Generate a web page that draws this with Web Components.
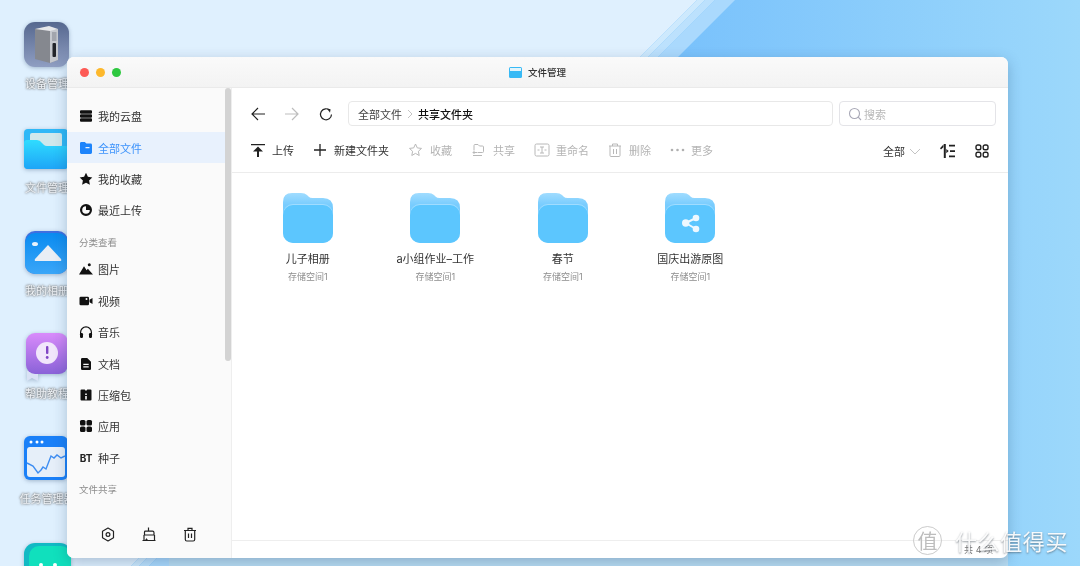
<!DOCTYPE html>
<html lang="zh">
<head>
<meta charset="utf-8">
<title>文件管理</title>
<style>
html, body { margin: 0; padding: 0; }
body { font-family: Inter, "Noto Sans CJK SC", sans-serif; width: 1080px; height: 566px; overflow: hidden; }
</style>
</head>
<body>

<nas-desktop>
  <desktop-icon slot="icons" top="22" label-top="54" label="设备管理">
    <svg width="46" height="46" viewBox="0 0 46 46"><defs><linearGradient id="dv" x1="0" y1="0" x2="0" y2="1"><stop offset="0" stop-color="#56688f"/><stop offset="1" stop-color="#8f9ec2"/></linearGradient></defs><rect width="45" height="45" rx="11" fill="url(#dv)"/><path d="M11 7l15-2 8 3v30l-8 3-15-4z" fill="#85888f"/><path d="M26 8l8-1v31l-8 3z" fill="#c5c8ce"/><path d="M11 7l14-3 9 3-8 2z" fill="#e6e7ea"/><rect x="28.5" y="21" width="3.5" height="14" rx="1" fill="#22242a"/><rect x="28" y="10" width="4.5" height="9" fill="#a2a5ad"/></svg>
  </desktop-icon>
  <desktop-icon slot="icons" top="129" label-top="51" label="文件管理">
    <svg width="46" height="46" viewBox="0 0 46 46"><defs><linearGradient id="fm" x1="0" y1="0" x2="0" y2="1"><stop offset="0" stop-color="#2fdcff"/><stop offset="1" stop-color="#1ea5f7"/></linearGradient></defs><path d="M0 4q0-4 4-4h36q4 0 4 4v32q0 4-4 4H4q-4 0-4-4z" fill="#2fb8f7"/><rect x="6" y="4" width="32" height="14" rx="2" fill="#cfe8ec"/><path d="M0 14q0-3 3-3h10q3 0 5 3l2 2q1 1 3 1h19q2 0 2 3v16q0 4-4 4H4q-4 0-4-4z" fill="url(#fm)"/></svg>
  </desktop-icon>
  <desktop-icon slot="icons" top="231" label-top="52" label="我的相册">
    <svg width="46" height="46" viewBox="0 0 46 46"><defs><linearGradient id="ph" x1="0" y1="0" x2="0" y2="1"><stop offset="0" stop-color="#0a8bf0"/><stop offset="1" stop-color="#3aa6f8"/></linearGradient></defs><rect x="1" y="0" width="43" height="43" rx="10" fill="#3f6fe0"/><rect x="1" y="2" width="43" height="41" rx="10" fill="url(#ph)"/><ellipse cx="11" cy="13" rx="3" ry="2" fill="#e8f3fc"/><path d="M24 14l13 14q1 2-1 2H12q-2 0-1-2z" fill="#e9eef5"/></svg>
  </desktop-icon>
  <desktop-icon slot="icons" top="333" label-top="53" label="帮助教程">
    <svg width="46" height="50" viewBox="0 0 46 50"><defs><linearGradient id="hp" x1="0" y1="0" x2="0" y2="1"><stop offset="0" stop-color="#d98bfb"/><stop offset="1" stop-color="#8a62d8"/></linearGradient></defs><path d="M3 38v10l5-3 6 3V38z" fill="#d9e2f5"/><rect x="2" y="0" width="42" height="41" rx="9" fill="url(#hp)"/><circle cx="23" cy="20" r="11" fill="#f1e6fb"/><rect x="22" y="13" width="2.4" height="8" rx="1" fill="#8146c4"/><circle cx="23.2" cy="24.5" r="1.4" fill="#8146c4"/></svg>
  </desktop-icon>
  <desktop-icon slot="icons" top="436" label-top="55" label="任务管理器">
    <svg width="46" height="46" viewBox="0 0 46 46"><rect width="44" height="44" rx="6" fill="#1a80f8"/><circle cx="7" cy="6" r="1.5" fill="#fff"/><circle cx="13" cy="6" r="1.5" fill="#fff"/><circle cx="18" cy="6" r="1.5" fill="#fff"/><rect x="3" y="11" width="38" height="30" rx="3" fill="#e6eff9"/><path d="M3 27l6 3 5 7 3-3 2-3 3 2 5-13 3 2 3-3 4 3 4-2" fill="none" stroke="#3d8df2" stroke-width="1.4"/></svg>
  </desktop-icon>
  <desktop-icon slot="icons" top="543" label-top="54" label="">
    <svg width="47" height="47" viewBox="0 0 47 47"><rect width="47" height="47" rx="11" fill="#12b9c4"/><rect x="5" y="3" width="42" height="44" rx="10" fill="#10e0bd"/><circle cx="17" cy="22" r="2" fill="#fff"/><circle cx="31" cy="22" r="2" fill="#fff"/></svg>
  </desktop-icon>

  <file-window slot="window"></file-window>
  <site-mark slot="mark"></site-mark>
</nas-desktop>

<script>
// shared fill-style icons for the sidebar, 14px box
const SIDE_ICONS = {
  disk: '<path d="M1 2.2q0-1 1-1h10q1 0 1 1v1.600q0 1-1 1H2q-1 0-1-1zM1 6.200q0-.9 1-.9h10q1 0 1 .9v1.600q0 .9-1 .9H2q-1 0-1-.9zM1 10.200q0-1 1-1h10q1 0 1 1v1.600q0 1-1 1H2q-1 0-1-1z"/>',
  file: '<path fill-rule="evenodd" d="M1 2.4q0-1.400 1.400-1.400h3.400l1.600 1.600h4.200q1.400 0 1.400 1.400v7.600q0 1.400-1.400 1.400H2.400Q1 13 1 11.600zM6.500 5.900v1.300h4V5.900z"/>',
  star: '<path d="M7 .8l1.900 4 4.400.6-3.200 3 .8 4.400L7 10.700l-3.900 2.100.8-4.400-3.200-3 4.400-.6z"/>',
  clock: '<path fill-rule="evenodd" d="M7 1a6 6 0 1 0 0 12A6 6 0 0 0 7 1zM7 3.200v3.800h3.800A3.800 3.800 0 1 1 7 3.200z"/>',
  image: '<path d="M0 12.500L5 4.300l2.600 3.900 1.300-1.500 5.100 5.800z"/><circle cx="10.300" cy="2.700" r="1.500"/>',
  video: '<path d="M.5 4q0-1.300 1.300-1.300h7Q10 2.700 10 4v6q0 1.300-1.200 1.300h-7Q.5 11.300.5 10zM10.500 5.700L13.500 4v6l-3-1.700z"/><circle cx="7.500" cy="5" r="1" fill="#fafafa"/>',
  music: '<path d="M7 1.300A6 6 0 0 0 1 7.300V12h1.200V7.300a4.800 4.800 0 0 1 9.600 0V12H13V7.300a6 6 0 0 0-6-6z"/><rect x="1" y="8" width="3" height="5" rx="1.200"/><rect x="10" y="8" width="3" height="5" rx="1.200"/>',
  doc: '<path fill-rule="evenodd" d="M2 2.200Q2 1 3.200 1h5L12 4.800v7Q12 13 10.800 13H3.200Q2 13 2 11.800zM4.300 6.800v1.100h5.400V6.800zM4.300 9.300v1.100h5.400V9.300z"/>',
  zip: '<path fill-rule="evenodd" d="M1.500 2.500Q1.500 1.500 2.500 1.500H5.700L7 3l1.300-1.500H11.500q1 0 1 1v9q0 1-1 1H2.500q-1 0-1-1zM6.200 5.500V7H7.800V5.500zM6.200 8V11.500H7.800V8z"/>',
  apps: '<rect x="1" y="1" width="5.500" height="5.500" rx="1.600"/><rect x="7.500" y="1" width="5.500" height="5.500" rx="1.600"/><rect x="1" y="7.500" width="5.500" height="5.500" rx="1.600"/><rect x="7.500" y="7.500" width="5.500" height="5.500" rx="1.600"/>'
};

class NasDesktop extends HTMLElement {
  constructor() {
    super();
    this.attachShadow({ mode: "open" }).innerHTML = `
    <style>
      :host { display: block; position: relative; width: 1080px; height: 566px; overflow: hidden;
        background: linear-gradient(90deg, #72bdfc 55%, #9cd8fb 100%); filter: blur(.3px); }
      .wall { position: absolute; inset: 0; }
    </style>
    <svg class="wall" width="1080" height="566" viewBox="0 0 1080 566">
      <polygon points="0,0 697,0 131,566 0,566" fill="#dff0fe"/>
      <polygon points="697,0 705,0 139,566 131,566" fill="#cde9fd"/>
      <polygon points="705,0 715,0 149,566 139,566" fill="#bce1fd"/>
      <polygon points="715,0 735,0 169,566 149,566" fill="#aad9fd"/>
      <rect x="169" y="552" width="839" height="14" fill="#b8dcf2"/>
    </svg>
    <slot name="icons"></slot>
    <slot name="window"></slot>
    <slot name="mark"></slot>`;
  }
}
customElements.define("nas-desktop", NasDesktop);

// desktop shortcuts sit on a free canvas
class DesktopIcon extends HTMLElement {
  constructor() {
    super();
    this.attachShadow({ mode: "open" }).innerHTML = `
    <style>
      :host { position: absolute; left: 24px; top: ${this.getAttribute("top")}px; display: block; width: 46px; }
      ::slotted(svg) { display: block; filter: drop-shadow(0 1px 2px rgba(40,70,110,.35)); }
      .label { position: absolute; left: -24px; top: ${this.getAttribute("label-top")}px; width: 94px; text-align: center; font-size: 11px; line-height: 16px;
        white-space: nowrap; color: #eef2f6; text-shadow: 0 0 2px #666, 0 0 3px #888; }
    </style>
    <slot></slot>
    <div class="label">${this.getAttribute("label")}</div>`;
  }
}
customElements.define("desktop-icon", DesktopIcon);

class SideItem extends HTMLElement {
  constructor() {
    super();
    const name = this.getAttribute("icon");
    const glyph = name === "bt"
      ? '<span class="bt">BT</span>'
      : `<svg width="14" height="14" viewBox="0 0 14 14" fill="currentColor">${SIDE_ICONS[name]}</svg>`;
    this.attachShadow({ mode: "open" }).innerHTML = `
    <style>
      :host { display: flex; align-items: center; gap: 5px; height: 31.4px; padding-left: 12px; font-size: 11px; color: #333; }
      :host([active]) { background: #e8f1fd; color: #3d93fb; }
      .ico { width: 14px; height: 14px; display: flex; align-items: center; justify-content: center; color: #111; }
      :host([active]) .ico { color: #1d84fb; }
      .bt { font-size: 10px; font-weight: 700; color: #222; }
      svg { display: block; }
    </style>
    <span class="ico">${glyph}</span><span><slot></slot></span>`;
  }
}
customElements.define("side-item", SideItem);

class SideBar extends HTMLElement {
  constructor() {
    super();
    this.attachShadow({ mode: "open" }).innerHTML = `
    <style>
      :host { position: relative; display: flex; flex-direction: column; width: 164px; flex: none; background: #fafafa; box-sizing: border-box;
        padding-top: 12.6px; overflow: hidden; }
      h5 { margin: 0; font-weight: 400; font-size: 9.5px; line-height: 13px; color: #8d8d8d; padding: 10px 0 4.6px 12px; }
      .list { flex: 1; }
      .thumb { position: absolute; right: 0; top: 0; width: 6px; height: 273px; border-radius: 3px; background: #d3d3d3; }
      .foot { display: flex; gap: 27px; padding: 0 0 16px 34px; color: #222; }
      .foot svg { display: block; }
    </style>
    <div class="list">
      <side-item icon="disk">我的云盘</side-item>
      <side-item icon="file" active>全部文件</side-item>
      <side-item icon="star">我的收藏</side-item>
      <side-item icon="clock">最近上传</side-item>
      <h5>分类查看</h5>
      <side-item icon="image">图片</side-item>
      <side-item icon="video">视频</side-item>
      <side-item icon="music">音乐</side-item>
      <side-item icon="doc">文档</side-item>
      <side-item icon="zip">压缩包</side-item>
      <side-item icon="apps">应用</side-item>
      <side-item icon="bt">种子</side-item>
      <h5>文件共享</h5>
    </div>
    <div class="foot">
      <svg width="14" height="15" viewBox="0 0 14 15" fill="none" stroke="currentColor" stroke-width="1.2"><path d="M7 1l5.500 3.200v6.600L7 14l-5.500-3.200V4.200z" stroke-linejoin="round"/><circle cx="7" cy="7.5" r="1.9"/></svg>
      <svg width="14" height="15" viewBox="0 0 14 15" fill="none" stroke="currentColor" stroke-width="1.2"><path d="M6.500 .5v4M2.500 5q0-.8 1-.8h7q1.500 0 1.500 1.500V8H2.500zM2 8v5.500h1.500l1-1.500 1 1.500h7V8M.5 13.500h13" stroke-linejoin="round"/></svg>
      <svg width="14" height="15" viewBox="0 0 14 15" fill="none" stroke="currentColor" stroke-width="1.2"><path d="M1 3.500h12M5 3.500V1.300h4v2.200M2.300 3.500v9q0 1.500 1.500 1.500h6.400q1.500 0 1.500-1.500v-9M5.500 6.500V11M8.500 6.500V11"/></svg>
    </div>
    <div class="thumb"></div>`;
  }
}
customElements.define("side-bar", SideBar);

class ToolBtn extends HTMLElement {
  constructor() {
    super();
    this.attachShadow({ mode: "open" }).innerHTML = `
    <style>
      :host { display: inline-flex; align-items: center; gap: 7px; font-size: 11px; color: #333; }
      :host([off]) { color: #b4b4b4; }
      ::slotted(svg) { display: block; }
    </style>
    <slot name="icon"></slot><span><slot></slot></span>`;
  }
}
customElements.define("tool-btn", ToolBtn);

class FileTile extends HTMLElement {
  constructor() {
    super();
    const share = this.hasAttribute("shared") ? `
      <g fill="#eef8ff">
        <path d="M20.700 30L31 25M20.700 30L31 36" fill="none" stroke="#eef8ff" stroke-width="2"/>
        <circle cx="20.700" cy="30" r="3.700"/><circle cx="31" cy="25" r="3.300"/><circle cx="31" cy="36" r="3.300"/>
      </g>` : "";
    const gid = "fb" + Math.random().toString(36).slice(2, 7);
    this.attachShadow({ mode: "open" }).innerHTML = `
    <style>
      :host { display: flex; flex-direction: column; align-items: center; width: 127.5px; }
      svg { display: block; }
      .name { margin-top: 9px; font-size: 11px; line-height: 15px; color: #333; white-space: nowrap; }
      .sub { margin-top: 3px; font-size: 9px; line-height: 13px; color: #8e8e8e; white-space: nowrap; }
    </style>
    <svg width="50" height="50" viewBox="0 0 50 50">
      <defs><linearGradient id="${gid}" x1="0" y1="0" x2="0" y2="1"><stop offset="0" stop-color="#a0dcff"/><stop offset=".3" stop-color="#78ccfe"/></linearGradient></defs>
      <path d="M0 9q0-9 9-9h9q4 0 6 2l1.500 1.500q1.500 1.500 4 1.500H40q10 0 10 10v25H0z" fill="url(#${gid})"/>
      <rect y="11" width="50" height="39" rx="10" fill="#a0dcff"/>
      <rect y="12" width="50" height="38" rx="10" fill="#5cc6fe"/>
      ${share}
    </svg>
    <div class="name"><slot></slot></div>
    <div class="sub">存储空间1</div>`;
  }
}
customElements.define("file-tile", FileTile);

class FileWindow extends HTMLElement {
  constructor() {
    super();
    this.attachShadow({ mode: "open" }).innerHTML = `
    <style>
      /* the window floats on the desktop */
      :host { position: absolute; left: 67px; top: 57px; width: 941px; height: 501px; display: flex; flex-direction: column;
        background: #fff; border-radius: 7px; box-shadow: 0 4px 14px rgba(30,60,100,.28); overflow: hidden; }
      .title { position: relative; flex: none; height: 30px; display: flex; align-items: center; justify-content: center; gap: 6px;
        background: linear-gradient(#fafafa, #f3f3f3); border-bottom: 1px solid #eaeaea; font-size: 9.5px; font-weight: 500; color: #333; }
      .lights { position: absolute; left: 13px; top: 11px; display: flex; gap: 7.1px; }
      .lights i { width: 9px; height: 9px; border-radius: 50%; }
      .body { flex: 1; min-height: 0; display: flex; }
      main { flex: 1; min-width: 0; display: flex; flex-direction: column; border-left: 1px solid #eee; }
      .nav { display: flex; align-items: center; height: 25px; margin: 13px 12px 0 19px; }
      .nav svg { display: block; flex: none; }
      .back { margin-right: 20px; }
      .crumbs { flex: 1; height: 25px; margin-left: 15px; box-sizing: border-box; border: 1px solid #e8e8e8; border-radius: 4px;
        display: flex; align-items: center; gap: 5px; padding-left: 9px; font-size: 11px; color: #444; }
      .crumbs b { color: #111; font-weight: 500; }
      .search { width: 157px; height: 25px; margin-left: 6px; box-sizing: border-box; border: 1px solid #e4e4e8; border-radius: 4px;
        display: flex; align-items: center; gap: 2px; padding-left: 8px; font-size: 11px; color: #b8b8b8; }
      .bar { flex: none; display: flex; align-items: center; height: 34px; margin-top: 7px; padding: 0 19px 5px 19px; border-bottom: 1px solid #ececec; gap: 19px; }
      .spacer { flex: 1; }
      .filter { display: flex; align-items: center; gap: 4px; font-size: 11px; color: #333; padding-top: 2px; }
      .views { display: flex; align-items: center; gap: 20px; padding-top: 2px; color: #222; }
      .views svg { display: block; }
      .tiles { flex: 1; display: flex; align-items: flex-start; padding: 20px 0 0 12px; }
      .foot { flex: none; height: 17px; border-top: 1px solid #eee; display: flex; align-items: center; justify-content: flex-end;
        padding-right: 15px; font-size: 9px; color: #777; }
    </style>
    <div class="title">
      <div class="lights"><i style="background:#fd5a55"></i><i style="background:#fdb82c"></i><i style="background:#2ec840"></i></div>
      <svg width="13" height="11" viewBox="0 0 13 11"><rect width="13" height="11" rx="1.5" fill="#37b9f5"/><rect x="1" y="1" width="11" height="3" fill="#e2f4fb"/></svg>
      <span>文件管理</span>
    </div>
    <div class="body">
      <side-bar></side-bar>
      <main>
        <div class="nav">
          <svg class="back" width="14" height="14" viewBox="0 0 14 14" fill="none" stroke="#222" stroke-width="1.2"><path d="M14 7H1M7 1L1 7l6 6"/></svg>
          <svg class="back" width="14" height="14" viewBox="0 0 14 14" fill="none" stroke="#bdbdbd" stroke-width="1.2"><path d="M0 7h13M7 1l6 6-6 6"/></svg>
          <svg width="14" height="14" viewBox="0 0 14 14" fill="none" stroke="#222" stroke-width="1.2"><path d="M11 3.500A5.500 5.500 0 1 0 12.500 7.500"/><path d="M8 1.500l3.500 .8-.5 3.500z" fill="#222" stroke="none"/></svg>
          <div class="crumbs"><span>全部文件</span><svg width="6" height="10" viewBox="0 0 6 10" fill="none" stroke="#c4c4c4"><path d="M1 1l4 4-4 4"/></svg><b>共享文件夹</b></div>
          <div class="search"><svg width="14" height="14" viewBox="0 0 14 14" fill="none" stroke="#a8a8b6" stroke-width="1.1"><circle cx="6.500" cy="6.500" r="5"/><path d="M10.200 10.200l2.800 2.800"/></svg><span>搜索</span></div>
        </div>
        <div class="bar">
          <tool-btn><svg slot="icon" width="14" height="14" viewBox="0 0 14 14" fill="#222"><path d="M0 1h14v1.300H0zM7 3.500l5 5H8v5.500H6V8.500H2z"/></svg>上传</tool-btn>
          <tool-btn><svg slot="icon" width="14" height="14" viewBox="0 0 14 14" fill="none" stroke="#222" stroke-width="1.3"><path d="M7 1v12M1 7h12"/></svg>新建文件夹</tool-btn>
          <tool-btn off><svg slot="icon" width="15" height="14" viewBox="0 0 14 14" fill="none" stroke="#b8b8b8"><path d="M7 1l1.800 3.900 4.200.5-3.100 2.900.8 4.200L7 10.400l-3.700 2.100.8-4.200L1 5.400l4.200-.5z" stroke-linejoin="round"/></svg>收藏</tool-btn>
          <tool-btn off><svg slot="icon" width="15" height="14" viewBox="0 0 14 14" fill="none" stroke="#b8b8b8"><path d="M2.500 7.500V2.500q0-1 1-1h3l1.500 1.500h3q1 0 1 1v4.500q0 1-1 1H6M5.500 9.500H1.500M3 8L1.500 9.500 3 11M1.500 12.500h9"/></svg>共享</tool-btn>
          <tool-btn off style="gap:6px"><svg slot="icon" width="16" height="14" viewBox="0 0 15 14" fill="none" stroke="#b8b8b8"><rect x=".5" y="1" width="14" height="12" rx="1.500"/><path d="M7.500 4v6M5.500 4h4M5.500 10h4M3 7h2M10 7h2"/></svg>重命名</tool-btn>
          <tool-btn off><svg slot="icon" width="14" height="14" viewBox="0 0 13 14" fill="none" stroke="#b8b8b8"><path d="M.5 3h12M4 3V1h5v2M1.500 3v9.500q0 1 1 1h8q1 0 1-1V3M5 6v5M8 6v5"/></svg>删除</tool-btn>
          <tool-btn off style="gap:6px"><svg slot="icon" width="15" height="14" viewBox="0 0 15 14" fill="#b0b0b0"><circle cx="2" cy="7" r="1.300"/><circle cx="7.500" cy="7" r="1.300"/><circle cx="13" cy="7" r="1.300"/></svg>更多</tool-btn>
          <span class="spacer"></span>
          <div class="filter"><span>全部</span><svg width="12" height="7" viewBox="0 0 12 7" fill="none" stroke="#c4c4c4"><path d="M1 1l5 5 5-5"/></svg></div>
          <div class="views">
            <svg width="15" height="14" viewBox="0 0 15 14" fill="#222"><path d="M3.800 0h2v14h-2zM0 4.200L3.400 .6v2.600L1 5.400zM9 .8h6v1.700H9zM10 6.200h5v1.700h-5zM9 11.600h6v1.700H9zM6.300 5l2.400 2.100-2.400 2.100z"/></svg>
            <svg width="14" height="14" viewBox="0 0 14 14" fill="none" stroke="#222" stroke-width="1.4"><rect x="1" y="1" width="4.800" height="4.800" rx="1.800"/><rect x="8.200" y="1" width="4.800" height="4.800" rx="1.800"/><rect x="1" y="8.200" width="4.800" height="4.800" rx="1.800"/><rect x="8.200" y="8.200" width="4.800" height="4.800" rx="1.800"/></svg>
          </div>
        </div>
        <div class="tiles">
          <file-tile>儿子相册</file-tile>
          <file-tile>a小组作业–工作</file-tile>
          <file-tile>春节</file-tile>
          <file-tile shared>国庆出游原图</file-tile>
        </div>
        <div class="foot">共 4 项</div>
      </main>
    </div>`;
  }
}
customElements.define("file-window", FileWindow);

// site watermark lies over the window corner
class SiteMark extends HTMLElement {
  constructor() {
    super();
    this.attachShadow({ mode: "open" }).innerHTML = `
    <style>
      :host { position: absolute; left: 913px; top: 526px; display: flex; align-items: center; gap: 13px; color: rgba(255,255,255,.92);
        text-shadow: 0 1px 2px rgba(60,70,80,.6); font-family: "Noto Sans CJK SC", sans-serif; }
      .seal { width: 29px; height: 29px; border-radius: 50%; box-sizing: border-box; border: 1px solid rgba(190,190,190,.8);
        display: flex; align-items: center; justify-content: center; font-size: 20px; line-height: 1; color: #bdbdbd; text-shadow: none; }
      .txt { font-size: 22px; line-height: 29px; letter-spacing: .6px; white-space: nowrap; }
    </style>
    <div class="seal">值</div><div class="txt">什么值得买</div>`;
  }
}
customElements.define("site-mark", SiteMark);
</script>
</body>
</html>
